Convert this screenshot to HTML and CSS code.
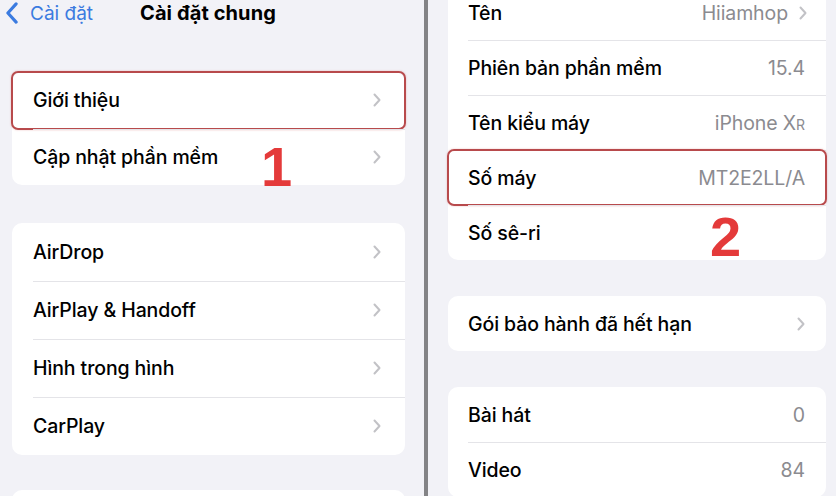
FILE: index.html
```html
<!DOCTYPE html>
<html lang="vi">
<head>
<meta charset="utf-8">
<title>Cài đặt chung</title>
<link rel="stylesheet" href="styles.css">
</head>
<body>
<div class="shot">
  <section class="pane pane-left">
    <header class="navbar">
      <a class="back" href="#">
        <svg class="back-icon" viewBox="0 0 14 24" width="14" height="22"><path d="M11.5 2 L2.5 12 L11.5 22" fill="none" stroke="currentColor" stroke-width="3.4" stroke-linecap="round" stroke-linejoin="round"/></svg>
        <span>Cài đặt</span>
      </a>
      <h1 class="nav-title">Cài đặt chung</h1>
    </header>

    <div class="group group-first">
      <div class="row row-left marked">
        <span class="label">Giới thiệu</span>
        <svg class="chev" viewBox="0 0 8 14" width="8" height="14"><path d="M1.5 1.5 L6.5 7 L1.5 12.5" fill="none" stroke="currentColor" stroke-width="2" stroke-linecap="round" stroke-linejoin="round"/></svg>
      </div>
      <div class="row row-left">
        <span class="label">Cập nhật phần mềm</span>
        <span class="step step-one">1</span>
        <svg class="chev" viewBox="0 0 8 14" width="8" height="14"><path d="M1.5 1.5 L6.5 7 L1.5 12.5" fill="none" stroke="currentColor" stroke-width="2" stroke-linecap="round" stroke-linejoin="round"/></svg>
      </div>
    </div>

    <div class="group group-second">
      <div class="row row-left">
        <span class="label">AirDrop</span>
        <svg class="chev" viewBox="0 0 8 14" width="8" height="14"><path d="M1.5 1.5 L6.5 7 L1.5 12.5" fill="none" stroke="currentColor" stroke-width="2" stroke-linecap="round" stroke-linejoin="round"/></svg>
      </div>
      <div class="row row-left">
        <span class="label">AirPlay &amp; Handoff</span>
        <svg class="chev" viewBox="0 0 8 14" width="8" height="14"><path d="M1.5 1.5 L6.5 7 L1.5 12.5" fill="none" stroke="currentColor" stroke-width="2" stroke-linecap="round" stroke-linejoin="round"/></svg>
      </div>
      <div class="row row-left">
        <span class="label">Hình trong hình</span>
        <svg class="chev" viewBox="0 0 8 14" width="8" height="14"><path d="M1.5 1.5 L6.5 7 L1.5 12.5" fill="none" stroke="currentColor" stroke-width="2" stroke-linecap="round" stroke-linejoin="round"/></svg>
      </div>
      <div class="row row-left">
        <span class="label">CarPlay</span>
        <svg class="chev" viewBox="0 0 8 14" width="8" height="14"><path d="M1.5 1.5 L6.5 7 L1.5 12.5" fill="none" stroke="currentColor" stroke-width="2" stroke-linecap="round" stroke-linejoin="round"/></svg>
      </div>
    </div>

    <div class="group group-third"></div>
  </section>

  <div class="divider"></div>

  <section class="pane pane-right">
    <div class="group group-info">
      <div class="row row-right">
        <span class="label">Tên</span>
        <span class="value">Hiiamhop</span>
        <svg class="chev chev-inline" viewBox="0 0 8 14" width="8" height="14"><path d="M1.5 1.5 L6.5 7 L1.5 12.5" fill="none" stroke="currentColor" stroke-width="2" stroke-linecap="round" stroke-linejoin="round"/></svg>
      </div>
      <div class="row row-right">
        <span class="label">Phiên bản phần mềm</span>
        <span class="value">15.4</span>
      </div>
      <div class="row row-right">
        <span class="label">Tên kiểu máy</span>
        <span class="value">iPhone X<span class="sc">r</span></span>
      </div>
      <div class="row row-right marked">
        <span class="label">Số máy</span>
        <span class="value">MT2E2LL/A</span>
      </div>
      <div class="row row-right">
        <span class="label">Số sê-ri</span>
        <span class="step step-two">2</span>
      </div>
    </div>

    <div class="group group-warranty">
      <div class="row row-right">
        <span class="label">Gói bảo hành đã hết hạn</span>
        <svg class="chev" viewBox="0 0 8 14" width="8" height="14"><path d="M1.5 1.5 L6.5 7 L1.5 12.5" fill="none" stroke="currentColor" stroke-width="2" stroke-linecap="round" stroke-linejoin="round"/></svg>
      </div>
    </div>

    <div class="group group-media">
      <div class="row row-right">
        <span class="label">Bài hát</span>
        <span class="value">0</span>
      </div>
      <div class="row row-right">
        <span class="label">Video</span>
        <span class="value">84</span>
      </div>
    </div>
  </section>
</div>
</body>
</html>
```

FILE: styles.css
```css
* {
  box-sizing: border-box;
}

html, body {
  margin: 0;
  padding: 0;
  width: 836px;
  height: 496px;
  overflow: hidden;
  background: #f2f2f7;
}

body {
  font-family: "Inter", "Noto Sans", "Liberation Sans", sans-serif;
  color: #000;
}

.shot {
  display: flex;
  width: 836px;
  height: 496px;
  overflow: hidden;
}

.pane {
  background: #f2f2f7;
  height: 496px;
  overflow: hidden;
  display: flex;
  flex-direction: column;
}

.pane > * {
  flex: none;
}

.pane-left {
  width: 424px;
  padding: 0 19px 0 12px;
}

.pane-right {
  width: 408px;
  padding: 0 10px 0 20px;
}

.divider {
  width: 4px;
  background: #838386;
  flex: none;
}

/* navigation bar */
.navbar {
  height: 26px;
  display: flex;
  align-items: center;
  margin: 0 -12px;
  padding-left: 5px;
}

.back {
  display: flex;
  align-items: center;
  gap: 11px;
  color: #3b7be0;
  text-decoration: none;
  font-size: 19px;
}

.back-icon {
  flex: none;
}

.nav-title {
  margin: 0 0 0 47px;
  font-size: 20px;
  font-weight: 700;
  letter-spacing: 0.1px;
}

/* grouped lists */
.group {
  background: #fff;
  border-radius: 10px;
}

.group-first {
  margin-top: 46px;
}

.group-second {
  margin-top: 38px;
}

.group-third {
  margin-top: 35px;
  height: 40px;
}

.group-info {
  margin-top: -15px;
}

.group-warranty {
  margin-top: 36px;
}

.group-media {
  margin-top: 36px;
}

.row {
  position: relative;
  display: flex;
  align-items: center;
  font-size: 19.5px;
  font-weight: 500;
  letter-spacing: -0.1px;
}

.row-left {
  height: 58px;
  padding: 0 24px 0 21px;
}

.group-first .row-left {
  height: 56.5px;
}

.row-right {
  height: 55px;
  padding: 0 21px 0 20px;
}

/* hairline separators, inset to the text column */
.row + .row::before {
  content: "";
  position: absolute;
  top: 0;
  right: 0;
  height: 1px;
  background: #e4e4e8;
}

.row-left + .row::before {
  left: 21px;
}

.row-right + .row::before {
  left: 20px;
}

.label {
  flex: 1;
  white-space: nowrap;
}

.value {
  color: #8b8b90;
  font-weight: 400;
  white-space: nowrap;
}

.sc {
  font-size: 14px;
  text-transform: uppercase;
}

.chev {
  color: #c2c2c6;
  flex: none;
}

.chev-inline {
  margin-left: 11px;
  margin-right: -2px;
}

/* red call-outs */
.marked::after {
  content: "";
  position: absolute;
  inset: -1px;
  border: 2px solid #b84a4c;
  border-radius: 7px;
  box-shadow: 0 0 2px rgba(200, 60, 60, 0.35);
}

.step {
  position: absolute;
  color: #e43a3a;
  font-family: "Liberation Sans", "Noto Sans", sans-serif;
  font-weight: 700;
  font-size: 56px;
  line-height: 1;
}

.step-one {
  left: 249px;
  top: 10px;
}

.step-two {
  left: 262px;
  top: 4px;
}
```
